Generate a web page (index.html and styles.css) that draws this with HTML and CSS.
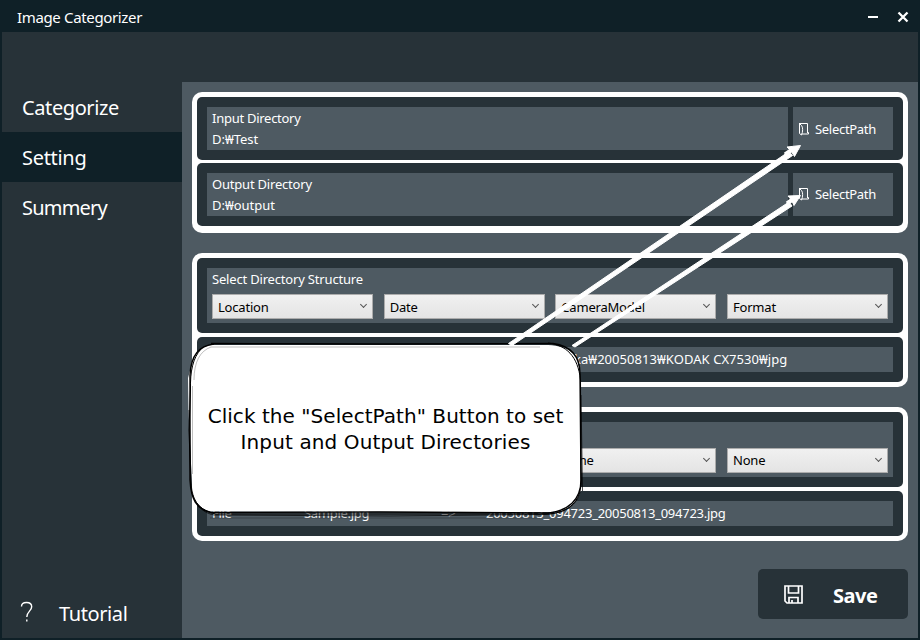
FILE: index.html
```html
<!DOCTYPE html>
<html lang="en">
<head>
<meta charset="utf-8">
<title>Image Categorizer</title>
<link rel="stylesheet" href="styles.css">
</head>
<body>
<div class="window">
  <header class="titlebar">
    <span class="title">Image Categorizer</span>
    <svg class="controls" width="60" height="32" viewBox="0 0 60 32" fill="none" stroke="#fff">
      <path d="M10 17h10" stroke-width="2"/><path d="M40.500 12.500l9 9m0-9l-9 9" stroke-width="2.300"/>
    </svg>
  </header>
  <div class="shell">
    <nav class="sidebar">
      <a class="nav n1">Categorize</a>
      <a class="nav n2 active">Setting</a>
      <a class="nav n3">Summery</a>
      <a class="nav tutorial"><svg width="14" height="22" viewBox="0 0 14 22" fill="none" stroke="#fff" stroke-width="1.400"><path d="M1.500 5.500C1.500 2.500 4 1.500 6.500 1.500c3 0 5.200 1.700 5.200 4.300C11.700 10 6.800 10.500 6.800 16M6.800 18.500v2"/></svg><span>Tutorial</span></a>
    </nav>
    <main class="main">
      <section class="group paths">
        <div class="card path-card">
          <div class="field"><div class="t1">Input Directory</div><div class="t2">D:₩Test</div></div>
          <div class="pick"><svg width="12" height="14" viewBox="0 0 12 14" fill="none" stroke="#fff"><path d="M1.500 1v10.500l2 1.500C5 10 5 5 3.500 3.500L1.500 1.500H9.500v9M3.500 12H10.500V10.500H9"/></svg><span>SelectPath</span></div>
        </div>
        <div class="card path-card">
          <div class="field"><div class="t3">Output Directory</div><div class="t4">D:₩output</div></div>
          <div class="pick"><svg width="12" height="14" viewBox="0 0 12 14" fill="none" stroke="#fff"><path d="M1.500 1v10.500l2 1.500C5 10 5 5 3.500 3.500L1.500 1.500H9.500v9M3.500 12H10.500V10.500H9"/></svg><span>SelectPath</span></div>
        </div>
      </section>
      <section class="group">
        <div class="card choose">
          <div class="field"><div class="t5">Select Directory Structure</div>
            <div class="selects">
              <div class="select"><span>Location</span><i></i></div>
              <div class="select"><span>Date</span><i></i></div>
              <div class="select"><span>CameraModel</span><i></i></div>
              <div class="select"><span>Format</span><i></i></div>
            </div>
          </div>
        </div>
        <div class="card sample"><div class="field directory"><span>ka₩20050813₩KODAK CX7530₩jpg</span></div></div>
      </section>
      <section class="group names">
        <div class="card choose">
          <div class="field"><div class="t5">&nbsp;</div>
            <div class="selects">
              <div class="select"><span></span><i></i></div>
              <div class="select"><span></span><i></i></div>
              <div class="select"><span>None</span><i></i></div>
              <div class="select"><span>None</span><i></i></div>
            </div>
          </div>
        </div>
        <div class="card sample"><div class="field file"><span>File</span><span>Sample.jpg</span><span>=&gt;</span><span class="name">20050813_094723_20050813_094723.jpg</span></div></div>
      </section>
      <div class="save"><svg width="19" height="19" viewBox="0 0 19 19" fill="none" stroke="#fff" stroke-width="1.700"><path d="M1 1h17v17H3l-2-2zM4.500 1v7h10V1M5 18v-5.500h9V18M8 18v-3"/></svg><span>Save</span></div>
    </main>
  </div>
</div>
<div class="callout">
  <svg width="921" height="641" viewBox="0 0 921 641" fill="none">
    <path d="M211 345H548C570 346 579 355 580 374L581 485C581 502 568 511 550 512L210 511.500C198 508 192 500 192 485L188.500 410L188 378L191 367C192 354 200 347 211 345Z" fill="#fff"/>
    <g stroke="#000">
      <path d="M211 343.500L380 344L553 343.500C571 346 580 356 580 374L581 480C581 500 568 511 548 513L380 512L211 512.500C196 509 191 499 190 480L190 375C191 355 199 346 214 344" stroke-width="1.400"/>
      <path d="M201 349C193 358 190 371 190.500 390L189 430 191 488C193 503 203 512 216 514H549C571 512 580 500 581 484L580.500 380C578 356 566 345 548 343"/>
      <path d="M189 410L191 482C192 500 199 512 214 515L390 516 545 514.500C566 513 577 505 580 492M581 395l1.500 96" opacity=".7"/>
      <path d="M211 347H540M192.500 386v88M210 518H540M194 380c0-18 6-29 17-33" opacity=".25"/>
    </g>
    <g fill="#fff" stroke="#fff" stroke-linejoin="round">
      <path d="M508.500 343.500L789 151.500l3.500 4L512 345.500zM572 345.500L789 202l3 4L575 347z"/>
      <path d="M800.500 145.500L787 147l4 4 3.500 5.500zM800.500 195.500L788 196l3.500 4 2.500 5.500z"/>
    </g>
    <path d="M785 154.500l8-5.500M787 203.500l7-5" stroke="#fff" stroke-width="4"/>
  </svg>
  <p class="line1">Click the "SelectPath" Button to set</p>
  <p class="line2">Input and Output Directories</p>
</div>
</body>
</html>
```
FILE: styles.css
```css
* { box-sizing: border-box; }
body { margin: 0; background: #fff; overflow: hidden; font: 13px/20px "Noto Sans", "Noto Sans CJK KR", sans-serif; color: #fff; }
.window { width: 920px; height: 640px; background: #273238; border: 2px solid #0f2027; border-top: 0; display: flex; flex-direction: column; }
.titlebar { height: 32px; flex: none; background: #0f2027; display: flex; justify-content: space-between; padding-left: 15px; }
.title { font-size: 15px; line-height: 35px; letter-spacing: -.35px; }
.shell { flex: 1; display: flex; padding-top: 50px; }
.sidebar { width: 180px; display: flex; flex-direction: column; }
.nav { height: 50px; padding-left: 20px; font-size: 20px; line-height: 51px; display: flex; letter-spacing: -.4px; }
.n2 { letter-spacing: -.3px; }
.n3 { letter-spacing: -.8px; }
.active { background: #0f2027; }
.tutorial { margin-top: auto; padding-left: 18px; align-items: center; gap: 25px; }
.tutorial svg { margin-top: -2px; }
.main { flex: 1; background: #4e5a62; padding: 10px 10px 19px; display: flex; flex-direction: column; }
.group { background: #fff; border-radius: 10px; padding: 5px; display: flex; flex-direction: column; gap: 4px; height: 134px; }
.group + .group { margin-top: 20px; }
.paths { height: 141px; gap: 2.5px; }
.card { background: #273238; border-radius: 5px; padding: 10px; display: flex; }
.path-card { height: 63px; gap: 5px; }
.field { flex: 1; background: #4e5a62; padding: 1px 5px; white-space: nowrap; }
.path-card .field { line-height: 21px; }
.pick { width: 100px; background: #4e5a62; display: flex; align-items: center; padding-left: 5px; gap: 5px; letter-spacing: -.3px; }
.choose { height: 75px; }
.selects { display: flex; justify-content: space-between; margin-top: 4px; }
.t1 { letter-spacing: -.27px; }
.t3 { letter-spacing: -.2px; }
.t5 { line-height: 21px; letter-spacing: -.18px; }
.select { width: 161px; height: 25px; border: 1px solid #acacac; background: linear-gradient(#f0f0f0, #e4e4e4); color: #000; padding-left: 5px; display: flex; justify-content: space-between; line-height: 25px; letter-spacing: -.2px; }
.names .select { line-height: 23px; }
.select i { width: 5px; height: 5px; border: solid #555; border-width: 0 1px 1px 0; transform: rotate(45deg); margin: 7px 6px 0 0; }
.sample { height: 45px; }
.sample .field { line-height: 23px; }
.directory { padding-left: 367px; letter-spacing: .06px; }
.file { display: grid; grid-template-columns: 92px 137px 45px 1fr; letter-spacing: -.3px; }
.name { letter-spacing: -.25px; }
.save { width: 150px; height: 50px; margin: auto 0 0 auto; border-radius: 5px; background: #273238; display: flex; align-items: center; padding-left: 26px; gap: 30px; font-size: 20px; font-weight: 700; letter-spacing: -.5px; }
.save span { padding-top: 3px; }
.callout { position: absolute; inset: 0; width: 921px; height: 641px; color: #000; }
.callout svg { position: absolute; }
.callout p { position: absolute; left: 190px; width: 391px; margin: 0; text-align: center; font: 20px/26px "DejaVu Sans", sans-serif; }
.callout .line1 { top: 403px; letter-spacing: .05px; }
.callout .line2 { top: 429px; letter-spacing: .12px; }
```
